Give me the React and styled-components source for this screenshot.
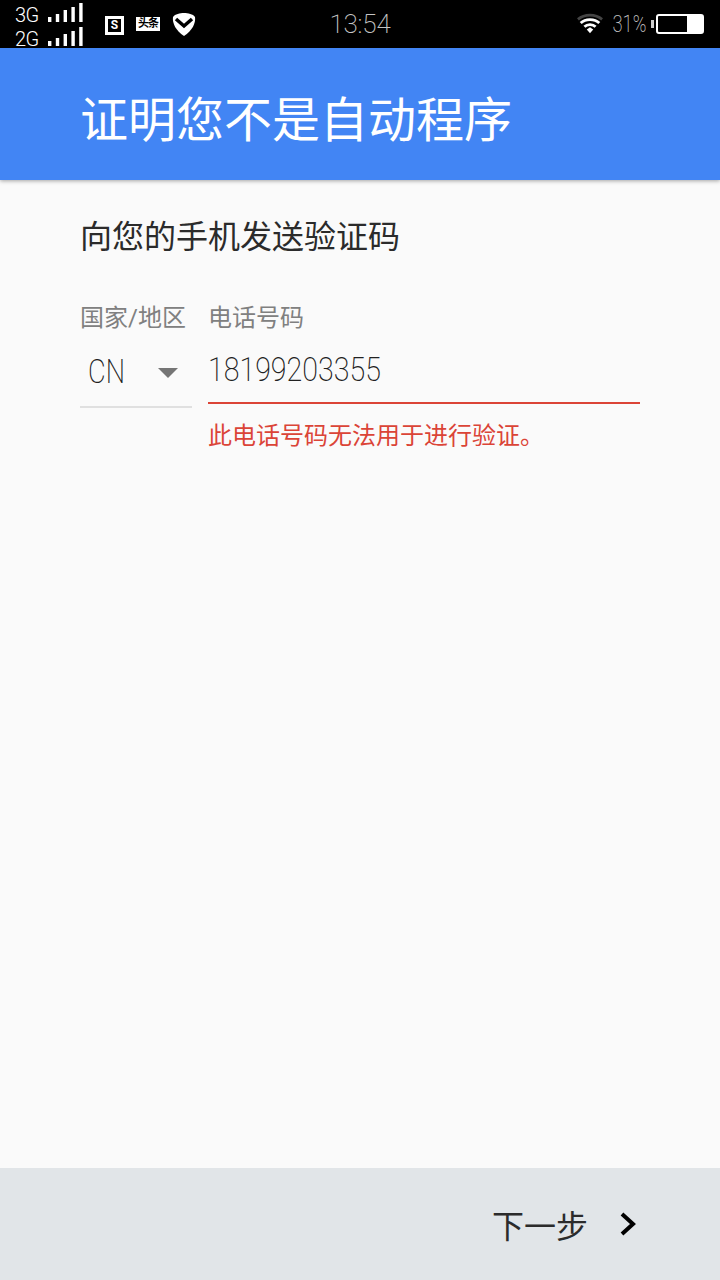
import React from "react";
import styled, { createGlobalStyle } from "styled-components";

const GlobalStyle = createGlobalStyle`
  html, body {
    margin: 0;
    padding: 0;
  }
  body {
    font-family: Roboto, "Noto Sans CJK SC", sans-serif;
    background: #fafafa;
  }
`;

const Screen = styled.div`
  width: 720px;
  height: 1280px;
  display: flex;
  flex-direction: column;
  overflow: hidden;
  background: #fafafa;
`;

const StatusBar = styled.div`
  height: 48px;
  flex: none;
  display: grid;
  grid-template-columns: 1fr auto 1fr;
  align-items: center;
  background: #000;
  color: #fff;
`;

const StatusLeft = styled.div`
  display: flex;
  align-items: center;
  padding-left: 15px;
`;

const Networks = styled.div`
  display: flex;
  flex-direction: column;
  width: 68px;
  margin-right: 21px;
`;

const NetworkRow = styled.div`
  height: 24px;
  display: flex;
  align-items: center;
  justify-content: space-between;
  font-size: 20px;
  font-weight: 300;
  letter-spacing: -0.5px;
`;

const NetworkName = styled.span`
  margin-top: 5px;
`;

const SimBadge = styled.div`
  width: 13px;
  height: 13px;
  border: 3px solid #fff;
  margin: 2px 12px 0 1px;
  display: flex;
  align-items: center;
  justify-content: center;
  font-size: 12px;
  font-weight: 700;
`;

const NewsBadge = styled.div`
  width: 24px;
  height: 14px;
  margin-right: 12px;
  background: #fff;
  color: #000;
  font-size: 11px;
  font-weight: 700;
  line-height: 14px;
  text-align: center;
  white-space: nowrap;
  letter-spacing: -1px;
`;

const Clock = styled.div`
  font-size: 26px;
  font-weight: 200;
  color: #c4c4c4;
  letter-spacing: -0.2px;
`;

const StatusRight = styled.div`
  display: flex;
  align-items: center;
  justify-content: flex-end;
  padding-right: 16px;
`;

const Percent = styled.span`
  display: inline-block;
  font-size: 23px;
  font-weight: 200;
  color: #c4c4c4;
  margin-left: 1px;
  margin-right: 5px;
  transform: scaleX(0.8);
  transform-origin: right center;
`;

const BatteryCap = styled.div`
  width: 3px;
  height: 8px;
  background: #ccc;
  margin-right: 2px;
`;

const Battery = styled.div`
  width: 44px;
  height: 16px;
  border: 2px solid #fff;
  border-radius: 3px;
  display: flex;
  justify-content: flex-end;
`;

const BatteryLevel = styled.div`
  width: 15px;
  background: #fff;
`;

const Header = styled.header`
  height: 132px;
  flex: none;
  box-sizing: border-box;
  display: flex;
  align-items: center;
  padding: 4px 0 0 80px;
  background: #4285f4;
  box-shadow: 0 1px 4px rgba(0, 0, 0, 0.35);
  color: #fff;
  font-size: 48px;
  position: relative;
`;

const Main = styled.main`
  flex: 1;
  padding: 36px 80px 0;
`;

const Heading = styled.div`
  font-size: 32px;
  line-height: 42px;
  color: #2b2b2b;
  margin-bottom: 43px;
`;

const Form = styled.div`
  display: flex;
  gap: 16px;
`;

const CountryField = styled.div`
  width: 112px;
  flex: none;
`;

const PhoneField = styled.div`
  flex: 1;
`;

const Label = styled.div`
  font-size: 24px;
  line-height: 34px;
  color: #808080;
  white-space: nowrap;
`;

const CountrySelect = styled.div`
  height: 71px;
  border-bottom: 2px solid #e0e0e0;
  display: flex;
  align-items: center;
  justify-content: space-between;
  padding: 0 14px 0 8px;
`;

const CountryCode = styled.span`
  display: inline-block;
  font-size: 34px;
  font-weight: 200;
  color: #212121;
  transform: scaleX(0.8);
  transform-origin: left center;
`;

const Caret = styled.div`
  width: 0;
  height: 0;
  margin-top: 4px;
  border-left: 10px solid transparent;
  border-right: 10px solid transparent;
  border-top: 10px solid #757575;
`;

const PhoneInput = styled.div`
  height: 67px;
  border-bottom: 2px solid #db4437;
  line-height: 68px;
`;

const PhoneValue = styled.span`
  display: inline-block;
  font-size: 34px;
  font-weight: 200;
  color: #212121;
  transform: scaleX(0.84);
  transform-origin: left center;
`;

const ErrorText = styled.div`
  margin-top: 16px;
  font-size: 24px;
  line-height: 32px;
  color: #db4437;
  white-space: nowrap;
`;

const Footer = styled.footer`
  height: 112px;
  flex: none;
  display: flex;
  align-items: center;
  justify-content: flex-end;
  gap: 30px;
  padding-right: 82px;
  background: #e1e5e8;
  color: #2b2b2b;
  font-size: 32px;
`;

const BAR_HEIGHTS = [5, 8, 12, 15, 19];

const Bars = () => (
  <svg width="36" height="20" viewBox="0 0 36 20">
    {BAR_HEIGHTS.map((h, i) => (
      <rect key={i} x={1 + i * 7.8} y={20 - h} width="3.4" height={h} fill="#fff" />
    ))}
  </svg>
);

const Shield = () => (
  <svg width="24" height="24" viewBox="0 0 24 24">
    <path
      d="M12 1C8 1 3 2 1 5C0 11 4 19 12 24C20 19 24 11 23 5C21 2 16 1 12 1Z"
      fill="#fff"
    />
    <path d="M4 7L12 14L20 7" fill="none" stroke="#000" strokeWidth="3.500" />
  </svg>
);

const Wifi = () => (
  <svg width="26" height="24" viewBox="0 0 28 24">
    <path d="M1 7C8 1 20 1 27 7" fill="none" stroke="#444" strokeWidth="3" />
    <path d="M4 11C9 6 19 6 24 11" fill="none" stroke="#fff" strokeWidth="3" />
    <path d="M8 15C11 12 17 12 20 15" fill="none" stroke="#fff" strokeWidth="3" />
    <path d="M10.500 18L14 15.500L17.500 18L14 22Z" fill="#fff" />
  </svg>
);

const Chevron = () => (
  <svg width="20" height="26" viewBox="0 0 20 26">
    <path d="M4 3L15 13L4 23" fill="none" stroke="#000" strokeWidth="4" />
  </svg>
);

export default function App() {
  return (
    <Screen>
      <GlobalStyle />
      <StatusBar>
        <StatusLeft>
          <Networks>
            <NetworkRow>
              <NetworkName>3G</NetworkName>
              <Bars />
            </NetworkRow>
            <NetworkRow>
              <NetworkName>2G</NetworkName>
              <Bars />
            </NetworkRow>
          </Networks>
          <SimBadge>S</SimBadge>
          <NewsBadge>头条</NewsBadge>
          <Shield />
        </StatusLeft>
        <Clock>13:54</Clock>
        <StatusRight>
          <Wifi />
          <Percent>31%</Percent>
          <BatteryCap />
          <Battery>
            <BatteryLevel />
          </Battery>
        </StatusRight>
      </StatusBar>
      <Header>证明您不是自动程序</Header>
      <Main>
        <Heading>向您的手机发送验证码</Heading>
        <Form>
          <CountryField>
            <Label>国家/地区</Label>
            <CountrySelect>
              <CountryCode>CN</CountryCode>
              <Caret />
            </CountrySelect>
          </CountryField>
          <PhoneField>
            <Label>电话号码</Label>
            <PhoneInput>
              <PhoneValue>18199203355</PhoneValue>
            </PhoneInput>
            <ErrorText>此电话号码无法用于进行验证。</ErrorText>
          </PhoneField>
        </Form>
      </Main>
      <Footer>
        下一步
        <Chevron />
      </Footer>
    </Screen>
  );
}
